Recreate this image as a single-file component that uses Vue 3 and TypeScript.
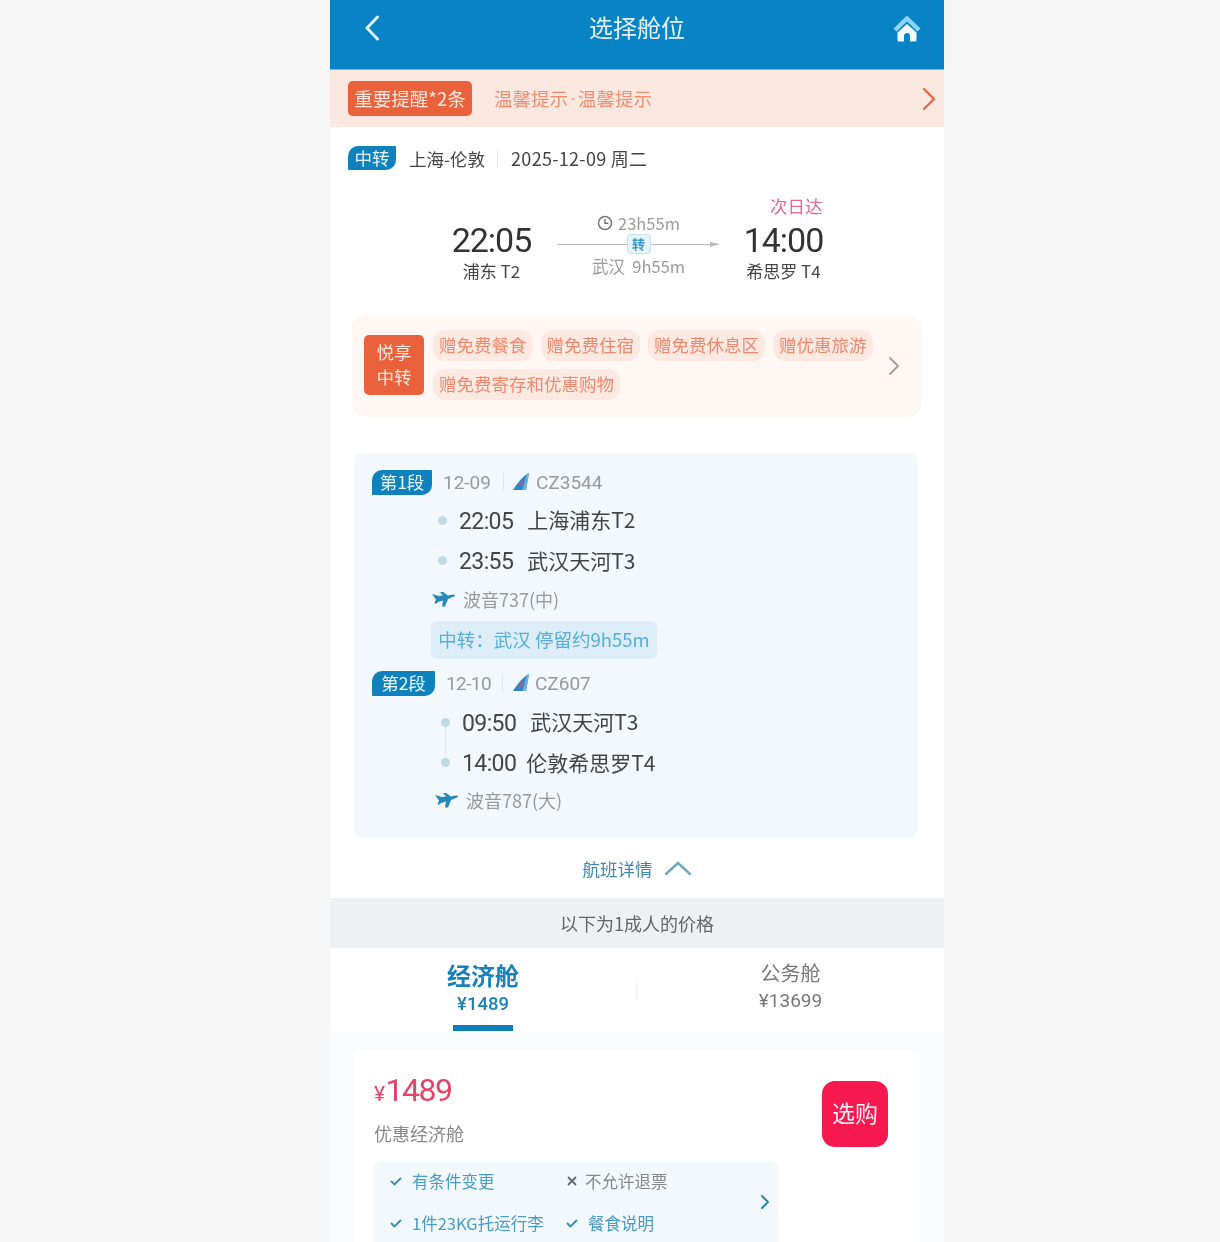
<script setup lang="ts">
interface Stop { time: string; place: string; tight?: boolean }
interface Segment { label: string; date: string; no: string; stops: Stop[]; plane: string; second: boolean }
const perksA: string[] = ['赠免费餐食', '赠免费住宿', '赠免费休息区', '赠优惠旅游']
const segments: Segment[] = [
  { label: '第1段', date: '12-09', no: 'CZ3544', second: false, plane: '波音737(中)',
    stops: [{ time: '22:05', place: '上海浦东T2' }, { time: '23:55', place: '武汉天河T3' }] },
  { label: '第2段', date: '12-10', no: 'CZ607', second: true, plane: '波音787(大)',
    stops: [{ time: '09:50', place: '武汉天河T3' }, { time: '14:00', place: '伦敦希思罗T4', tight: true }] }
]
</script>

<template>
  <div class="page">
    <main class="phone">
      <header class="nav">
        <svg class="back" width="16" height="26" viewBox="0 0 16 26"><path d="M13.5 2 3 13l10.500 11" fill="none" stroke="#dff1fb" stroke-width="3" stroke-linecap="round" stroke-linejoin="round"/></svg>
        <h1>选择舱位</h1>
        <svg class="home" width="30" height="30" viewBox="0 0 30 30">
          <path d="M1.500 15.500 15 2.500l13.500 13-3 3L15 8.500 4.500 18.500z" fill="#8fd3f8"/>
          <path d="M15 11 24.500 19.500V27a1.500 1.500 0 0 1-1.500 1.500h-5V23a3 3 0 0 0-6 0v5.500H7A1.500 1.500 0 0 1 5.500 27V19.500z" fill="#f4fbff"/>
        </svg>
      </header>

      <section class="notice">
        <span class="notice-tag">重要提醒*2条</span>
        <span class="notice-text">温馨提示<span class="mid-dot">·</span>温馨提示</span>
        <svg width="14" height="24" viewBox="0 0 14 24"><path d="M2 2l10 10L2 22" fill="none" stroke="#e8674a" stroke-width="2.400" stroke-linecap="round" stroke-linejoin="round"/></svg>
      </section>

      <section class="route">
        <span class="leaf route-leaf">中转</span>
        <span>上海-伦敦</span>
        <i class="vline"></i>
        <span class="route-date">2025-12-09 周二</span>
      </section>

      <section class="summary">
        <div class="end">
          <span class="next-day"></span>
          <b>22:05</b>
          <span>浦东 T2</span>
        </div>
        <div class="mid">
          <div class="dur">
            <svg width="16" height="16" viewBox="0 0 16 16"><circle cx="8" cy="8" r="6.500" fill="none" stroke="#777" stroke-width="1.500"/><path d="M8 4v4.300h3.300" fill="none" stroke="#777" stroke-width="1.500"/></svg>
            <span>23h55m</span>
          </div>
          <div class="track"><span class="transfer">转</span></div>
          <div class="via">武汉&nbsp; 9h55m</div>
        </div>
        <div class="end">
          <span class="next-day">次日达</span>
          <b>14:00</b>
          <span>希思罗 T4</span>
        </div>
      </section>

      <section class="perks">
        <div class="perk-badge">悦享<br>中转</div>
        <div class="perk-list">
          <span v-for="p in perksA" :key="p" class="perk">{{ p }}</span>
          <span class="perk">赠免费寄存和优惠购物</span>
        </div>
        <svg width="12" height="20" viewBox="0 0 12 20"><path d="M2 2l8 8-8 8" fill="none" stroke="#a89a94" stroke-width="1.800" stroke-linecap="round" stroke-linejoin="round"/></svg>
      </section>

      <section class="segments">
        <div v-for="(s, i) in segments" :key="s.no" class="segment" :class="{ second: s.second }">
          <div class="seg-head">
            <span class="leaf seg-leaf">{{ s.label }}</span>
            <span class="seg-date">{{ s.date }}</span>
            <i class="vline light"></i>
            <svg width="18" height="20" viewBox="0 0 18 20">
              <path d="M17 1C12 3 6 10 1 18h13z" fill="#2e86c8"/>
              <path d="M17 1 14 18h-3.500L14.500 3z" fill="#6fb0dc"/>
              <path d="M11.500 7.500 10 14l-3.500-.5z" fill="#b85a7a"/>
            </svg>
            <span class="seg-no">{{ s.no }}</span>
          </div>
          <div class="stops">
            <div v-for="st in s.stops" :key="st.time" class="stop">
              <i class="dot"></i>
              <span class="stop-time" :class="{ tight: st.tight }">{{ st.time }}</span>
              <span class="stop-place">{{ st.place }}</span>
            </div>
          </div>
          <div class="plane">
            <svg width="24" height="18" viewBox="0 0 24 18"><path d="M0 4 7 6l4-.500L8 2h3l5 3.500 5-1c2.500 0 2.500 1.700 1 2L16 9l-3 7.500h-3l1-6-5 1.500-2.500 2-1-1L4 9.500z" fill="#2488b8"/></svg>
            <span>{{ s.plane }}</span>
          </div>
          <div v-if="i === 0" class="stay">中转：武汉 停留约9h55m</div>
        </div>
      </section>

      <div class="fold">
        <span>航班详情</span>
        <svg width="28" height="16" viewBox="0 0 28 16"><path d="M2 14 14 3l12 11" fill="none" stroke="#6da7c4" stroke-width="2.400" stroke-linecap="round"/></svg>
      </div>

      <div class="price-note">以下为1成人的价格</div>

      <nav class="tabs">
        <div class="tab active">
          <b>经济舱</b>
          <span>¥1489</span>
          <i class="underline"></i>
        </div>
        <i class="tab-sep"></i>
        <div class="tab">
          <b>公务舱</b>
          <span>¥13699</span>
        </div>
      </nav>

      <section class="fare-wrap">
        <article class="fare">
          <div class="fare-main">
            <div class="fare-price"><small>¥</small>1489</div>
            <div class="fare-name">优惠经济舱</div>
            <div class="rules">
              <div class="rule-grid">
                <span class="rule"><svg width="14" height="12" viewBox="0 0 14 12"><path d="M2 6l3.500 3.500L12 3" fill="none" stroke="#2b8fbd" stroke-width="1.800"/></svg>有条件变更</span>
                <span class="rule no"><svg width="14" height="12" viewBox="0 0 14 12"><path d="M3 2l8 8M11 2l-8 8" fill="none" stroke="#666" stroke-width="1.800"/></svg>不允许退票</span>
                <span class="rule"><svg width="14" height="12" viewBox="0 0 14 12"><path d="M2 6l3.500 3.500L12 3" fill="none" stroke="#2b8fbd" stroke-width="1.800"/></svg>1件23KG托运行李</span>
                <span class="rule"><svg width="14" height="12" viewBox="0 0 14 12"><path d="M2 6l3.500 3.500L12 3" fill="none" stroke="#2b8fbd" stroke-width="1.800"/></svg>餐食说明</span>
              </div>
              <svg width="10" height="16" viewBox="0 0 10 16"><path d="M2 2l6 6-6 6" fill="none" stroke="#2a85b8" stroke-width="2" stroke-linecap="round" stroke-linejoin="round"/></svg>
            </div>
          </div>
          <button class="buy" type="button">选购</button>
        </article>
      </section>
    </main>
  </div>
</template>

<style>
html, body { margin: 0; background: #f6f6f6; }
</style>

<style scoped>
.page {
  height: 1242px;
  overflow: hidden;
  display: flex;
  padding-left: 330px;
  box-sizing: border-box;
  font-family: "Noto Sans CJK SC", "Noto Sans", sans-serif;
  color: #444;
}
.phone { width: 614px; height: 1242px; background: #fff; overflow: hidden; filter: blur(0.6px); }
i { display: block; font-style: normal; }

.nav {
  height: 54px;
  background: #0884c6;
  border-bottom: 1px solid #6db9e6;
  display: flex;
  align-items: flex-start;
  justify-content: space-between;
  padding: 15px 22px 0 34px;
}
.nav h1 { margin: -4px 0 0 2px; font-size: 24px; line-height: 32px; font-weight: 400; color: #e3f3fc; }
.home { margin-top: -2px; }

.notice {
  height: 57px;
  background: #fbe8e1;
  display: flex;
  align-items: center;
  padding: 0 8px 0 18px;
}
.notice-tag {
  width: 124px;
  height: 35px;
  background: #e9623b;
  border-radius: 5px;
  color: #fde6dc;
  font-size: 18.500px;
  line-height: 34px;
  text-align: center;
  white-space: nowrap;
}
.notice-text { flex: 1; margin: -2px 0 0 22px; font-size: 18.500px; color: #ed8f75; white-space: nowrap; }
.mid-dot { display: inline-block; width: 10px; text-align: center; font-family: Roboto, sans-serif; }

.leaf {
  display: block;
  background: #0f82bd;
  color: #e7f5fc;
  text-align: center;
  border-radius: 10px 1px 10px 1px;
}
.route {
  height: 62px;
  display: flex;
  align-items: center;
  padding-left: 18px;
  font-size: 17.500px;
  color: #444;
}
.route-leaf { width: 48px; height: 24px; line-height: 23px; margin-right: 13px; font-size: 17.500px; }
.route-date { font-size: 18px; letter-spacing: 0.300px; margin-left: 1px; }
.vline { width: 1px; height: 18px; background: #e3e3e3; margin: 0 12px; }
.vline.light { background: #dfe7ee; margin: 0 8px 0 12px; }

.summary {
  height: 126px;
  display: flex;
  justify-content: center;
  align-items: flex-start;
  padding-left: 1px;
  box-sizing: border-box;
}
.end { width: 82px; display: flex; flex-direction: column; align-items: center; font-size: 17px; line-height: 24px; color: #444; padding-top: 5px; }
.end b { font-family: Roboto, sans-serif; font-weight: 400; font-size: 34px; letter-spacing: -1px; line-height: 39px; margin: 3px 0 -1px; color: #333; }
.end .next-day { height: 24px; align-self: flex-end; margin-right: 2px; color: #e0689a; font-size: 17.500px; white-space: nowrap; }
.mid { width: 162px; margin: 23px 24px 0; color: #9a9a9a; font-size: 17px; text-align: center; }
.dur { height: 22px; line-height: 22px; display: flex; justify-content: center; align-items: center; gap: 5px; font-size: 16.500px; padding-left: 2px; }
.track { height: 20px; position: relative; }
.track::before { content: ""; position: absolute; left: 0; right: 0; top: 10px; height: 1px; background: #b9b9b9; }
.track::after { content: ""; position: absolute; right: 0; top: 8px; border-left: 9px solid #b9b9b9; border-top: 2px solid transparent; border-bottom: 3px solid transparent; }
.transfer {
  position: absolute; left: 70px; top: 0; width: 24px; height: 20px; line-height: 18px;
  background: #e6f3fa; border: 1px solid #c6e2f1; border-radius: 3px; box-sizing: border-box;
  color: #3a9acb; font-size: 13px; font-weight: 700;
}
.via { line-height: 26px; font-size: 16.500px; margin-top: -1px; padding-left: 2px; }

.perks {
  width: 570px;
  height: 102px;
  margin-left: 22px;
  background: #fff7f3;
  border-radius: 14px;
  display: flex;
  align-items: center;
  padding: 0 22px 0 12px;
  box-sizing: border-box;
}
.perk-badge {
  width: 60px; height: 60px; flex: none; margin-top: -2px; padding-bottom: 2px; box-sizing: border-box;
  background: #e9623b; color: #fde6dc;
  border-radius: 5px; font-size: 17.500px; line-height: 25px;
  display: flex; align-items: center; justify-content: center; text-align: center;
}
.perk-list { flex: 1; display: flex; flex-wrap: wrap; gap: 8px; margin: -2px 0 0 9px; }
.perk { height: 31px; line-height: 29px; padding: 0 6px; border-radius: 12px; background: #fbe9e2; color: #ec8a6f; font-size: 17.500px; white-space: nowrap; }

.segments {
  width: 564px;
  height: 385px;
  margin: 36px 0 0 24px;
  background: #f2f8fc;
  border-radius: 6px;
  padding: 16px 0 0 18px;
  box-sizing: border-box;
}
.seg-head { display: flex; align-items: center; height: 26px; color: #999; font-size: 19px; }
.seg-leaf { width: 60px; height: 25px; line-height: 24px; margin-right: 11px; font-size: 17.500px; flex: none; }
.seg-date { width: 48px; font-family: Roboto, sans-serif; }
.seg-no { margin-left: 6px; font-family: Roboto, sans-serif; }
.stops { margin: 5px 0 0 66px; position: relative; }
.stop { display: flex; align-items: center; height: 40.500px; font-size: 21px; color: #444; }
.stop-time { font-family: Roboto, sans-serif; font-size: 23px; letter-spacing: -0.600px; margin: 2px 14px 0 0; }
.stop-time.tight { margin-right: 10px; }
.stop-place { margin-top: -2px; }
.dot { width: 9px; height: 9px; border-radius: 50%; background: #c0d8e3; margin-right: 12px; position: relative; z-index: 1; }
.plane { margin-left: 60px; display: flex; align-items: center; gap: 7px; height: 36px; color: #999; font-size: 18px; }
.stay {
  width: 226px; height: 38px; line-height: 36px; margin: 4px 0 11px 59px; text-align: center;
  background: #dcedf7; border-radius: 6px; color: #58aed6; font-size: 18.500px; white-space: nowrap;
}
.second .seg-leaf { width: 63px; }
.second .seg-date { letter-spacing: -0.600px; }
.second .vline.light { margin: 0 9px 0 8px; }
.second .seg-no { margin-left: 5px; }
.second .stops { margin: 6px 0 0 69px; position: relative; }
.second .stops::before { content: ""; position: absolute; left: 3.500px; top: 20px; height: 40px; width: 1px; background: #dbe8ef; }
.second .plane { margin: -1px 0 0 63px; }

.fold { height: 60px; display: flex; justify-content: center; align-items: center; gap: 11px; color: #3f88ad; font-size: 17.500px; }
.price-note { height: 50px; line-height: 50px; text-align: center; background: #eef1f3; color: #666; font-size: 18px; }

.tabs { height: 83px; display: flex; align-items: center; }
.tab { width: 307px; display: flex; flex-direction: column; align-items: center; position: relative; height: 83px; box-sizing: border-box; padding-top: 9px; color: #777; }
.tab b { font-weight: 400; font-size: 20px; line-height: 32px; }
.tab span { font-family: Roboto, sans-serif; font-size: 19px; line-height: 24px; }
.tab.active { color: #1b80b8; width: 306px; padding-top: 10px; }
.tab.active b { font-size: 24px; font-weight: 700; line-height: 34px; }
.tab.active span { font-weight: 500; font-size: 18.500px; }
.underline { position: absolute; bottom: 0; left: 123px; width: 60px; height: 6px; background: #0f7fba; }
.tab-sep { width: 1px; height: 24px; background: #eee; }

.fare-wrap { background: #fafbfc; padding: 19px 24px 0; height: 240px; box-sizing: border-box; }
.fare { height: 260px; background: #fff; border-radius: 6px; display: flex; padding: 20px 31px 0 20px; box-sizing: border-box; position: relative; }
.fare-main { width: 404px; }
.fare-price { color: #e2446a; font-family: Roboto, sans-serif; font-size: 32px; letter-spacing: -1.500px; line-height: 40px; }
.fare-price small { font-size: 21px; margin-right: 2px; }
.fare-name { margin-top: 6px; color: #888; font-size: 18px; line-height: 26px; }
.rules { margin-top: 16px; height: 84px; width: 404px; background: #f2f8fc; border-radius: 6px; display: flex; align-items: center; padding: 0 8px 4px 15px; box-sizing: border-box; }
.rule-grid { flex: 1; display: grid; grid-template-columns: 176px 1fr; row-gap: 18px; }
.rule { display: flex; align-items: center; gap: 9px; color: #4a9bc4; font-size: 16.500px; line-height: 24px; white-space: nowrap; }
.rule.no { color: #888; gap: 6px; }
.buy {
  position: absolute; right: 32px; top: 31px; width: 66px; height: 66px; border: 0; padding: 0 0 5px;
  background: #f5194f; color: #fff0f3; border-radius: 13px; font: inherit; font-size: 23px;
}
</style>
